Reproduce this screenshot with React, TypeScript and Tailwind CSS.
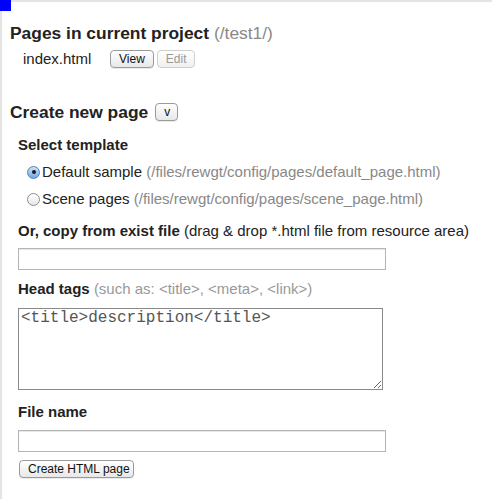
import React from "react";

const btn =
  "h-[18px] px-[8px] rounded-[4px] border border-[#9a9a9a] bg-gradient-to-b from-white to-[#e8e8e8] text-[12px] leading-[16px] text-[#111] whitespace-nowrap shadow-[0_1px_0_rgba(0,0,0,0.08)]";

const Radio = ({ checked }: { checked?: boolean }) =>
  checked ? (
    <span className="flex h-[13px] w-[13px] shrink-0 items-center justify-center rounded-full border border-[#5a7fb5] bg-gradient-to-b from-[#cfe3fb] to-[#6ea6e8]">
      <span className="h-[4px] w-[4px] rounded-full bg-[#1a1a1a]" />
    </span>
  ) : (
    <span className="h-[13px] w-[13px] shrink-0 rounded-full border border-[#8e8e8e] bg-gradient-to-b from-white to-[#e6e6e6]" />
  );

export default function App() {
  return (
    <div className="relative min-h-[499px] border-t-2 border-l-2 border-[#e4e4e4] bg-white font-['Liberation_Sans',Arial,sans-serif] text-[#222]">
      <div className="absolute -left-[2px] -top-[2px] h-[11px] w-[11px] bg-[#0000ff]" />
      <div className="pl-[8px] pt-[20px]">
        <h2 className="whitespace-nowrap text-[17.4px] font-bold leading-[22px]">
          Pages in current project{" "}
          <span className="font-normal text-[#888]">(/test1/)</span>
        </h2>
        <div className="mt-[5px] flex h-[20px] items-center pl-[13px]">
          <span className="w-[87px] text-[15px]">index.html</span>
          <button className={btn}>View</button>
          <button className="ml-[3px] h-[18px] rounded-[4px] border border-[#cfcfcf] bg-gradient-to-b from-white to-[#f0f0f0] px-[8px] text-[12px] leading-[16px] text-[#999]">
            Edit
          </button>
        </div>

        <div className="mt-[32px] flex h-[22px] items-center">
          <h2 className="text-[17.4px] font-bold leading-[22px]">Create new page</h2>
          <button className={btn + " ml-[7px] w-[23px] px-0 text-[11px]"}>v</button>
        </div>

        <div className="pl-[8px] text-[15px]">
          <h3 className="mt-[13px] font-bold leading-[18px]">Select template</h3>
          <div className="mt-[9px] flex h-[18px] items-center gap-[2px] whitespace-nowrap pl-[9px]">
            <Radio checked />
            <span>
              Default sample{" "}
              <span className="text-[#888]">(/files/rewgt/config/pages/default_page.html)</span>
            </span>
          </div>
          <div className="mt-[9px] flex h-[18px] items-center gap-[2px] whitespace-nowrap pl-[9px]">
            <Radio />
            <span>
              Scene pages{" "}
              <span className="text-[#888]">(/files/rewgt/config/pages/scene_page.html)</span>
            </span>
          </div>

          <p className="mt-[14px] whitespace-nowrap leading-[18px]">
            <b>Or, copy from exist file</b> (drag &amp; drop *.html file from resource area)
          </p>
          <input className="mt-[8px] block h-[22px] w-[368px] border border-[#b5b5b5] shadow-[inset_0_1px_1px_rgba(0,0,0,0.1)] outline-none" />

          <p className="mt-[10px] whitespace-nowrap leading-[18px]">
            <b>Head tags</b>{" "}
            <span className="text-[#999]">(such as: &lt;title&gt;, &lt;meta&gt;, &lt;link&gt;)</span>
          </p>
          <textarea
            defaultValue="<title>description</title>"
            className="mt-[10px] block h-[82px] w-[365px] resize border border-[#8a8a8a] px-[2px] py-0 font-['Liberation_Mono','Courier_New',monospace] text-[16px] leading-[18px] text-[#555] outline-none"
          />

          <h3 className="mt-[13px] font-bold leading-[18px]">File name</h3>
          <input className="mt-[9px] block h-[22px] w-[368px] border border-[#b5b5b5] shadow-[inset_0_1px_1px_rgba(0,0,0,0.1)] outline-none" />
          <button className={btn + " mt-[8px] ml-[1px] block w-[115px] px-0"}>Create HTML page</button>
        </div>
      </div>
    </div>
  );
}
